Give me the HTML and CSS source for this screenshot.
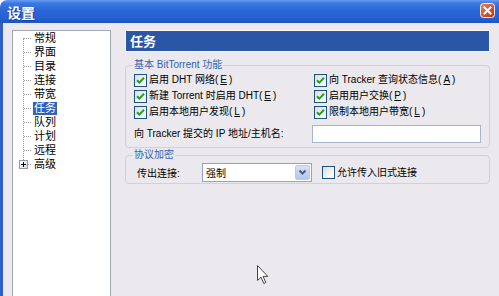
FILE: index.html
```html
<!DOCTYPE html>
<html lang="zh-CN">
<head>
<meta charset="utf-8">
<title>设置</title>
<link rel="stylesheet" href="styles.css">
</head>
<body>
<div class="window">
  <div class="titlebar">
    <span class="title">设置</span>
    <span class="close">
      <svg width="15" height="15" viewBox="0 0 15 15">
        <defs>
          <linearGradient id="cg" x1="0" y1="0" x2="1" y2="1">
            <stop offset="0" stop-color="#f08a68"/>
            <stop offset="0.5" stop-color="#dc5230"/>
            <stop offset="1" stop-color="#b8330f"/>
          </linearGradient>
        </defs>
        <rect x="0.5" y="0.5" width="14" height="14" rx="3" fill="url(#cg)" stroke="#f4f4f4"/>
        <path d="M4.5 4.5 L10.5 10.5 M10.5 4.5 L4.5 10.5" stroke="#fff" stroke-width="2" stroke-linecap="square"/>
      </svg>
    </span>
  </div>
  <div class="client">
    <div class="tree">
      <div class="tree-lines">
        <div class="tree-items">
          <div class="node"><span class="branch"></span><span class="label">常规</span></div>
          <div class="node"><span class="branch"></span><span class="label">界面</span></div>
          <div class="node"><span class="branch"></span><span class="label">目录</span></div>
          <div class="node"><span class="branch"></span><span class="label">连接</span></div>
          <div class="node"><span class="branch"></span><span class="label">带宽</span></div>
          <div class="node selected"><span class="branch"></span><span class="label">任务</span></div>
          <div class="node"><span class="branch"></span><span class="label">队列</span></div>
          <div class="node"><span class="branch"></span><span class="label">计划</span></div>
          <div class="node"><span class="branch"></span><span class="label">远程</span></div>
          <div class="node"><span class="branch"><span class="expander"><svg width="7" height="7" viewBox="0 0 7 7"><path d="M1 3.5 H6 M3.5 1 V6" stroke="#000" stroke-width="1"/></svg></span></span><span class="label">高级</span></div>
        </div>
      </div>
    </div>
    <div class="panel">
      <div class="panel-header">任务</div>
      <fieldset class="group">
        <legend>基本 BitTorrent 功能</legend>
        <div class="grid">
          <label class="check"><span class="cb on"></span>启用 DHT 网络(<u>E</u>)</label>
          <label class="check col2"><span class="cb on"></span>向 Tracker 查询状态信息(<u>A</u>)</label>
          <label class="check"><span class="cb on"></span>新建 Torrent 时启用 DHT(<u>E</u>)</label>
          <label class="check col2"><span class="cb on"></span>启用用户交换(<u>P</u>)</label>
          <label class="check"><span class="cb on"></span>启用本地用户发现(<u>L</u>)</label>
          <label class="check col2"><span class="cb on"></span>限制本地用户带宽(<u>L</u>)</label>
          <span class="ip-label">向 Tracker 提交的 IP 地址/主机名:</span>
          <span class="textbox"></span>
        </div>
      </fieldset>
      <fieldset class="group group2">
        <legend>协议加密</legend>
        <div class="enc-row">
          <span class="enc-label">传出连接:</span>
          <span class="select"><span class="select-text">强制</span><span class="drop"><svg width="9" height="7" viewBox="0 0 9 7"><path d="M1.5 1.5 L4.5 4.5 L7.5 1.5" fill="none" stroke="#4a5d86" stroke-width="2"/></svg></span></span>
          <label class="check legacy"><span class="cb"></span>允许传入旧式连接</label>
        </div>
      </fieldset>
    </div>
  </div>
  <svg class="cursor" width="13" height="20" viewBox="0 0 13 20">
    <path d="M0.5 0.5 L0.5 15.5 L4 12.2 L6.8 18.5 L8.8 17.6 L6.1 11.4 L10.8 11.4 Z" fill="#fff" stroke="#444" stroke-width="1" stroke-linejoin="miter"/>
  </svg>
</div>
</body>
</html>
```

FILE: styles.css
```css
* {
  box-sizing: border-box;
}

html, body {
  margin: 0;
  padding: 0;
}

body {
  width: 499px;
  height: 296px;
  overflow: hidden;
  background: #ffffff;
  font-family: "Liberation Sans", "Noto Sans CJK SC", sans-serif;
  font-size: 11px;
  color: #000;
}

.window {
  position: relative;
  width: 499px;
  height: 296px;
  display: flex;
  flex-direction: column;
  overflow: hidden;
}

.titlebar {
  flex: none;
  height: 23px;
  display: flex;
  align-items: center;
  justify-content: space-between;
  padding: 0 4px 0 7px;
  border-top-left-radius: 7px;
  background: linear-gradient(180deg, #6a9cee 0%, #3b79e2 14%, #2b67d7 45%, #2660d1 78%, #1d53c2 100%);
}

.title {
  color: #fff;
  font-family: "Noto Sans CJK SC", sans-serif;
  font-weight: bold;
  font-size: 14px;
  line-height: 16px;
  text-shadow: 1px 1px 0 #123f9e;
}

.close {
  display: flex;
  width: 15px;
  height: 15px;
  margin-top: -2px;
}

.client {
  flex: 1;
  min-height: 0;
  display: flex;
  gap: 14px;
  padding: 7px 9px 0 9px;
  background: #ebe9ed;
  border-left: 3px solid #2d60c9;
}

.tree {
  flex: none;
  width: 99px;
  height: 290px;
  background: #fff;
  border: 1px solid #a2a9b4;
}

.tree-lines {
  display: flex;
  flex-direction: column;
  margin: 7px 0 7px 10px;
  border-left: 1px dotted #9a9a9a;
}

.tree-items {
  display: flex;
  flex-direction: column;
  margin: -7px 0 -7px -1px;
}

.node {
  display: flex;
  align-items: center;
  height: 14px;
  white-space: nowrap;
}

.branch {
  flex: none;
  width: 8px;
  height: 1px;
  margin-left: 1px;
  display: flex;
  align-items: center;
  background: linear-gradient(to right, #9a9a9a 1px, transparent 1px) 0 0 / 2px 1px repeat-x;
}

.expander {
  flex: none;
  width: 9px;
  height: 9px;
  margin-left: -5px;
  display: flex;
  align-items: center;
  justify-content: center;
  border: 1px solid #8f9aab;
  background: linear-gradient(135deg, #ffffff, #dcdcd8);
}

.label {
  margin-left: 1px;
  padding: 0 1px;
  line-height: 13px;
}

.node.selected .label {
  background: #3163b6;
  color: #fff;
}

.panel {
  flex: none;
  width: 365px;
  display: flex;
  flex-direction: column;
  font-size: 10px;
}

.panel-header {
  height: 22px;
  border: 1px solid #f6f6f8;
  background: #2b56a6;
  color: #fff;
  font-family: "Noto Sans CJK SC", sans-serif;
  font-weight: bold;
  font-size: 13px;
  line-height: 19px;
  padding-left: 4px;
}

.group {
  margin: 6px 0 0 0;
  padding: 0 8px 4px 8px;
  border: 1px solid #d2d0d8;
  border-radius: 4px;
  min-width: 0;
}

.group legend {
  margin-left: -1px;
  padding: 0 1px;
  color: #3461b0;
  font-size: 10px;
  line-height: 14px;
}

.group2 {
  margin-top: 0;
  padding-bottom: 1px;
}

.grid {
  display: grid;
  grid-template-columns: 180px 1fr;
  grid-template-rows: 16px 16px 16px 23px;
}

.check {
  display: flex;
  align-items: center;
  gap: 2px;
  white-space: nowrap;
  line-height: 14px;
}

.check u {
  text-decoration: underline;
}

.cb {
  flex: none;
  width: 13px;
  height: 13px;
  border: 1px solid #1c5180;
  background: linear-gradient(135deg, #dcdcd7 0%, #f4f4f0 60%, #ffffff 100%);
}

.cb.on {
  background:
    url("data:image/svg+xml,%3Csvg xmlns='http://www.w3.org/2000/svg' width='11' height='11' viewBox='0 0 11 11'%3E%3Cpath d='M2 5.2 L4.3 7.6 L9 2.8' fill='none' stroke='%2321a121' stroke-width='2'/%3E%3C/svg%3E") center / 11px 11px no-repeat,
    linear-gradient(135deg, #dcdcd7 0%, #f4f4f0 60%, #ffffff 100%);
}

.ip-label {
  align-self: end;
  line-height: 18px;
  white-space: nowrap;
}

.textbox {
  align-self: end;
  margin-left: -2px;
  width: 169px;
  height: 18px;
  background: #fff;
  border: 1px solid #a6b6cd;
}

.enc-row {
  display: flex;
  align-items: center;
  height: 19px;
  margin-top: 1px;
}

.enc-label {
  flex: none;
  width: 68px;
  padding-left: 3px;
  white-space: nowrap;
}

.select {
  flex: none;
  width: 110px;
  height: 19px;
  display: flex;
  align-items: center;
  justify-content: space-between;
  padding: 0 1px 0 3px;
  background: #fff;
  border: 1px solid #8ea4c4;
}

.drop {
  width: 15px;
  height: 15px;
  display: flex;
  align-items: center;
  justify-content: center;
  border: 1px solid #b9cbec;
  border-radius: 2px;
  background: linear-gradient(180deg, #d6e2f8 0%, #c1d3f3 50%, #b3c8ef 100%);
}

.legacy {
  margin-left: 10px;
}

.cursor {
  position: absolute;
  left: 257px;
  top: 265px;
}
```
